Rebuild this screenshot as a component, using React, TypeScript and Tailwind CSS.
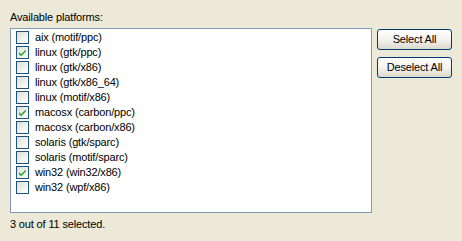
const platforms = [
  { label: 'aix (motif/ppc)', checked: false },
  { label: 'linux (gtk/ppc)', checked: true },
  { label: 'linux (gtk/x86)', checked: false },
  { label: 'linux (gtk/x86_64)', checked: false },
  { label: 'linux (motif/x86)', checked: false },
  { label: 'macosx (carbon/ppc)', checked: true },
  { label: 'macosx (carbon/x86)', checked: false },
  { label: 'solaris (gtk/sparc)', checked: false },
  { label: 'solaris (motif/sparc)', checked: false },
  { label: 'win32 (win32/x86)', checked: true },
  { label: 'win32 (wpf/x86)', checked: false },
]

const CheckMark = () => (
  <svg viewBox="0 0 11 11" className="h-[11px] w-[11px]" aria-hidden="true">
    <path d="M2 5 L4 7.2 L8.8 2.4 L8.8 4.4 L4 9.2 L2 7.2 Z" fill="#21a121" />
  </svg>
)

const XpCheckbox = ({ checked }: { checked: boolean }) => (
  <div className="flex h-[13px] w-[13px] shrink-0 items-center justify-center border border-[#1c5180] bg-gradient-to-br from-[#dcdcd7] via-[#f0f0ea] to-white">
    {checked ? <CheckMark /> : null}
  </div>
)

const XpButton = ({ children }: { children: React.ReactNode }) => (
  <button
    type="button"
    className="flex h-[21px] w-[75px] items-center justify-center rounded-[3px] border border-[#003c74] bg-gradient-to-b from-white via-[#f4f3ee] to-[#dcd8cc] text-[11px] leading-none text-black"
  >
    {children}
  </button>
)

export default function App() {
  const selected = platforms.filter((p) => p.checked).length

  return (
    <div className="h-[241px] w-[462px] bg-[#ece9d8] px-[10px] pt-[11px] font-['Liberation_Sans',Arial,sans-serif] text-[11px] tracking-[-0.15px] text-black">
      <div className="h-[17px] leading-[13px]">Available platforms:</div>
      <div className="flex gap-[5px]">
        <div className="h-[185px] w-[362px] border border-[#7f9db9] bg-white pt-px">
          {platforms.map((p) => (
            <div key={p.label} className="flex h-[15px] items-center gap-[6px] pl-[5px]">
              <XpCheckbox checked={p.checked} />
              <span className="leading-none">{p.label}</span>
            </div>
          ))}
        </div>
        <div className="flex flex-col gap-[7px] pt-px">
          <XpButton>Select All</XpButton>
          <XpButton>Deselect All</XpButton>
        </div>
      </div>
      <div className="mt-[5px] leading-[13px]">
        {selected} out of {platforms.length} selected.
      </div>
    </div>
  )
}
